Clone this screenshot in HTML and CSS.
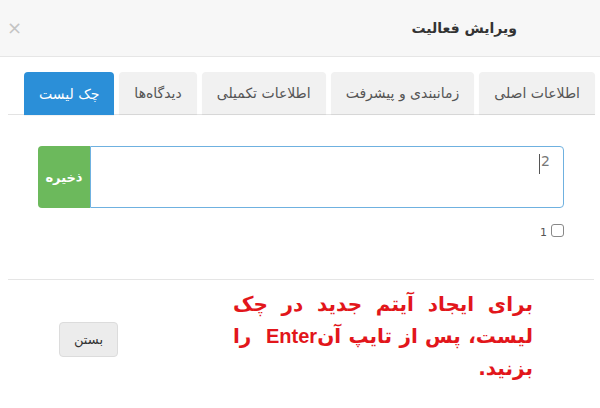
FILE: index.html
```html
<!DOCTYPE html>
<html lang="fa" dir="rtl">
<head>
<meta charset="utf-8">
<title>ویرایش فعالیت</title>
<link rel="stylesheet" href="styles.css">
</head>
<body>
<div class="modal">
  <div class="modal-header">
    <h4 class="modal-title">ویرایش فعالیت</h4>
    <span class="close">×</span>
  </div>
  <div class="modal-body">
    <ul class="tabs">
      <li class="tab">اطلاعات اصلی</li>
      <li class="tab">زمانبندی و پیشرفت</li>
      <li class="tab">اطلاعات تکمیلی</li>
      <li class="tab">دیدگاه‌ها</li>
      <li class="tab active">چک لیست</li>
    </ul>
    <div class="input-group">
      <div class="field"><span class="val">2</span><span class="caret"></span></div>
      <button class="btn-save">ذخیره</button>
    </div>
    <div class="check-row">
      <span class="box"></span><span class="num">1</span>
    </div>
  </div>
  <div class="modal-footer">
    <div class="note">
      <div class="line just">برای ایجاد آیتم جدید در چک</div>
      <div class="line just">لیست، پس از تایپ آن<b class="en">Enter</b>&nbsp; را</div>
      <div class="line">بزنید.</div>
    </div>
    <button class="btn-close">بستن</button>
  </div>
</div>
</body>
</html>
```

FILE: styles.css
```css
* { box-sizing: border-box; }
html, body { margin: 0; padding: 0; background: #fff; }
body {
  width: 600px;
  height: 408px;
  overflow: hidden;
  font-family: "DejaVu Sans", sans-serif;
  color: #333;
}
.modal { direction: rtl; }
.modal-header {
  height: 57px;
  background: #f7f7f7;
  border-bottom: 1px solid #e6e6e6;
  display: flex;
  align-items: center;
  justify-content: space-between;
  padding: 0 83px 0 7px;
}
.modal-title {
  margin: 0;
  font-size: 14px;
  font-weight: bold;
  color: #333;
}
.close {
  font-size: 18px;
  color: #c4c4c4;
  line-height: 1;
}
.modal-body {
  padding: 15px 5px 0 8px;
}
.tabs {
  list-style: none;
  margin: 0;
  padding: 0;
  display: flex;
  gap: 5px;
  border-bottom: 1px solid #e3e3e3;
  height: 43px;
}
.tab {
  height: 42px;
  padding: 0 15px;
  display: flex;
  align-items: center;
  background: #f1f1f1;
  color: #555;
  font-size: 14px;
  border-radius: 4px 4px 0 0;
  box-shadow: 0 1px 1px rgba(0,0,0,0.06);
}
.tab.active {
  background: #2b8fd8;
  color: #fff;
  height: 43px;
}
.input-group {
  display: flex;
  margin: 31px 31px 0 30px;
  height: 62px;
}
.field {
  flex: 1;
  border: 1px solid #6fb1e0;
  border-radius: 0 4px 4px 0;
  background: #fff;
  padding: 6px 13px 0 0;
  font-size: 14px;
  color: #777;
  display: flex;
  align-items: flex-start;
}
.caret {
  display: inline-block;
  width: 1px;
  height: 20px;
  background: #555;
  margin-right: 1px;
  margin-top: 1px;
}
.btn-save {
  width: 52px;
  border: none;
  background: #6cb95c;
  color: #fff;
  font-family: inherit;
  font-size: 13px;
  font-weight: bold;
  border-radius: 4px 0 0 4px;
  padding: 0;
}
.check-row {
  display: flex;
  align-items: center;
  gap: 4px;
  margin: 15px 31px 0 0;
  height: 14px;
}
.box {
  width: 13px;
  height: 13px;
  border: 1px solid #888;
  border-radius: 3px;
}
.num {
  font-size: 11px;
  color: #555;
  padding-top: 5px;
}
.modal-footer {
  margin: 42px 6px 0 8px;
  border-top: 1px solid #e5e5e5;
  display: flex;
  align-items: center;
  justify-content: space-between;
  padding: 8px 61px 0 51px;
}
.note {
  width: 300px;
  color: #e2161b;
  font-weight: bold;
  font-size: 20px;
  line-height: 32px;
}
.line { text-align: right; }
.line.just { text-align: justify; text-align-last: justify; }
.en { font-family: "Liberation Sans", sans-serif; font-weight: bold; }
.btn-close {
  width: 59px;
  height: 35px;
  background: #ececec;
  border: 1px solid #dcdcdc;
  border-radius: 4px;
  font-family: inherit;
  font-size: 13px;
  color: #333;
  padding: 0;
  margin-top: 6px;
}
```
